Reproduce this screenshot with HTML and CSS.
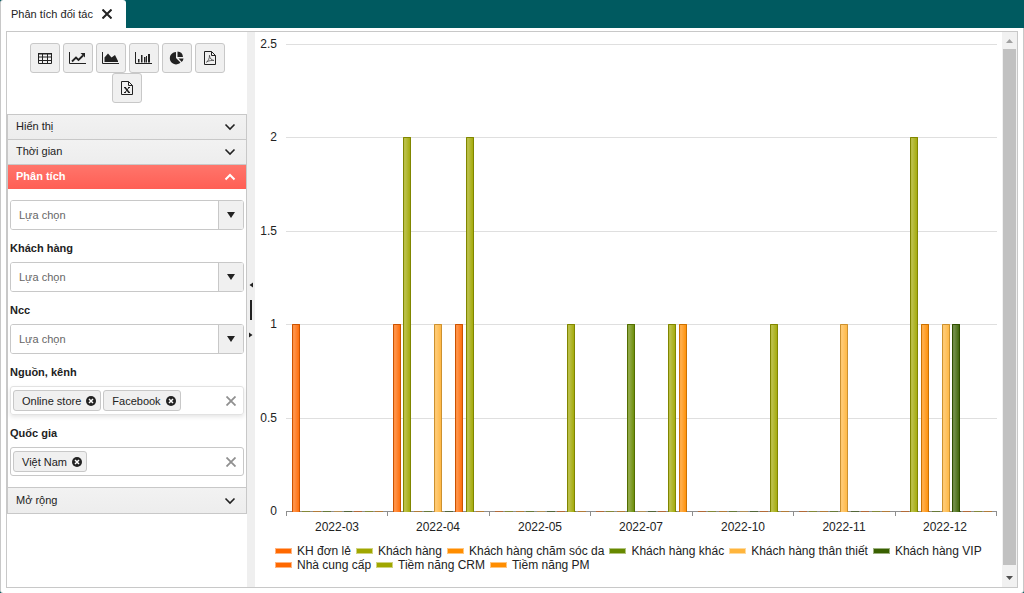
FILE: index.html
```
<!DOCTYPE html>
<html lang="vi">
<head>
<meta charset="utf-8">
<title>Phân tích đối tác</title>
<link rel="stylesheet" href="styles.css">
</head>
<body>
<header class="tabs">
  <div class="tab">
    <span>Phân tích đối tác</span>
    <button class="icon-btn" type="button" aria-label="Đóng thẻ">
      <svg width="10" height="10" viewBox="0 0 10 10"><path d="M.5 .5l9 9M9.500 .5l-9 9" stroke="#222" stroke-width="2" fill="none"/></svg>
    </button>
  </div>
</header>
<main class="page">
  <div class="splitter">
    <aside class="sidebar">
      <div class="toolbar">
        <button class="tool" type="button" aria-label="Bảng"><svg width="16" height="16" viewBox="0 0 16 16"><path fill="none" stroke="#222" d="M1.500 3.500h13v10h-13zM1.500 7h13M1.500 10.500h13M5.500 3v10.500M10.500 3v10.500"/><path fill="#222" d="M1 3h14v1.500H1z"/></svg></button>
        <button class="tool" type="button" aria-label="Biểu đồ đường"><svg width="17" height="16" viewBox="0 0 17 16"><path d="M.5 2v11.500H17" fill="none" stroke="#222"/><path d="M3 11.500l4-4 2.500 2.500L14 5.500" fill="none" stroke="#222" stroke-width="1.800"/><path d="M11.500 3H16v4.500z" fill="#222"/></svg></button>
        <button class="tool" type="button" aria-label="Biểu đồ miền"><svg width="17" height="16" viewBox="0 0 17 16"><path d="M.5 2v11.500H17" fill="none" stroke="#222"/><path d="M2.500 12V7.500L6 3.500 9.500 7.500l3.500-2.500L16 11v1z" fill="#222"/></svg></button>
        <button class="tool" type="button" aria-label="Biểu đồ cột"><svg width="17" height="16" viewBox="0 0 17 16"><path d="M.5 2v11.500H17" fill="none" stroke="#222"/><path d="M3 9h1.500v3.500H3zM6 5h1.500v7.500H6zM9 7h1.500v5.500H9zM11 6h1v6.500h-1zM13 4h2v8.500h-2z" fill="#222"/></svg></button>
        <button class="tool" type="button" aria-label="Biểu đồ tròn"><svg width="16" height="16" viewBox="0 0 16 16"><path d="M7 2v6l4.500 4.500A6.200 6.200 0 1 1 7 2z" fill="#222"/><path d="M8.500 1.500A6 6 0 0 1 14 7H8.500z" fill="#222"/><path d="M9.500 8.500H14.500a6 6 0 0 1-1.800 3.600z" fill="#222"/></svg></button>
        <button class="tool" type="button" aria-label="Xuất PDF"><svg width="16" height="16" viewBox="0 0 16 16"><path d="M2.500 1.500h7l4 4v9h-11zM9.500 1.500v4h4" fill="none" stroke="#222"/><path d="M7.500 5c.2 3.500-1.500 6.500-3.500 7.500M7.500 6c.5 2.500 2 4 4.500 4.500-2.500-.3-5 .2-7 1.200" fill="none" stroke="#555" stroke-width=".9"/></svg></button>
        <button class="tool" type="button" aria-label="Xuất Excel"><svg width="16" height="16" viewBox="0 0 16 16"><path d="M2.500 1.500h7l4 4v9h-11zM9.500 1.500v4h4" fill="none" stroke="#222"/><path d="M6 7.500l4 5" stroke="#222" stroke-width="1.600"/><path d="M10 7.500l-4 5M5 7.500h2M9 7.500h2M5 12.500h2M9 12.500h2" stroke="#222"/></svg></button>
      </div>
      <div class="panels">
        <button class="panel-head" type="button"><span>Hiển thị</span><svg class="chev" viewBox="0 0 12 8"><path d="M1.500 1.500L6 6l4.500-4.500"/></svg></button>
        <button class="panel-head" type="button"><span>Thời gian</span><svg class="chev" viewBox="0 0 12 8"><path d="M1.500 1.500L6 6l4.500-4.500"/></svg></button>
        <button class="panel-head active" type="button" aria-expanded="true"><span>Phân tích</span><svg class="chev" viewBox="0 0 12 8"><path d="M1.500 6.500L6 2l4.500 4.500"/></svg></button>
        <div class="panel-body">
          <div class="combo"><select aria-label="Phân tích"><option>Lựa chọn</option></select><span class="arrow"></span></div>
          <label class="label" for="customer">Khách hàng</label>
          <div class="combo"><select id="customer"><option>Lựa chọn</option></select><span class="arrow"></span></div>
          <label class="label" for="supplier">Ncc</label>
          <div class="combo"><select id="supplier"><option>Lựa chọn</option></select><span class="arrow"></span></div>
          <label class="label" for="source">Nguồn, kênh</label>
          <div class="multi raised">
            <span class="chip">Online store<button class="icon-btn" type="button" aria-label="Bỏ Online store"><svg width="10" height="10" viewBox="0 0 10 10"><circle cx="5" cy="5" r="5" fill="#222"/><path d="M3 3l4 4M7 3l-4 4" stroke="#fff" stroke-width="1.500"/></svg></button></span>
            <span class="chip">Facebook<button class="icon-btn" type="button" aria-label="Bỏ Facebook"><svg width="10" height="10" viewBox="0 0 10 10"><circle cx="5" cy="5" r="5" fill="#222"/><path d="M3 3l4 4M7 3l-4 4" stroke="#fff" stroke-width="1.500"/></svg></button></span>
            <input id="source" type="text">
            <button class="icon-btn" type="button" aria-label="Xóa"><svg width="10" height="10" viewBox="0 0 10 10"><path d="M.5 .5l9 9M9.500 .5l-9 9" stroke="#909090" stroke-width="1.800"/></svg></button>
          </div>
          <label class="label" for="country">Quốc gia</label>
          <div class="multi">
            <span class="chip">Việt Nam<button class="icon-btn" type="button" aria-label="Bỏ Việt Nam"><svg width="10" height="10" viewBox="0 0 10 10"><circle cx="5" cy="5" r="5" fill="#222"/><path d="M3 3l4 4M7 3l-4 4" stroke="#fff" stroke-width="1.500"/></svg></button></span>
            <input id="country" type="text">
            <button class="icon-btn" type="button" aria-label="Xóa"><svg width="10" height="10" viewBox="0 0 10 10"><path d="M.5 .5l9 9M9.500 .5l-9 9" stroke="#909090" stroke-width="1.800"/></svg></button>
          </div>
        </div>
        <button class="panel-head" type="button"><span>Mở rộng</span><svg class="chev" viewBox="0 0 12 8"><path d="M1.500 1.500L6 6l4.500-4.500"/></svg></button>
      </div>
    </aside>
    <div class="splitbar">
      <svg width="4" height="6" viewBox="0 0 4 6"><path d="M4 .5v5L.5 3z" fill="#222"/></svg>
      <span class="grip"></span>
      <svg width="4" height="6" viewBox="0 0 4 6"><path d="M0 .5v5L3.500 3z" fill="#222"/></svg>
    </div>
    <section class="chart">
      <svg class="plot" viewBox="255 32 747 512" role="img" aria-label="Số đối tác theo tháng">
        <defs>
          <linearGradient id="glass"><stop offset="0" stop-color="#fff" stop-opacity=".16"/><stop offset=".25" stop-color="#fff" stop-opacity=".3"/><stop offset="1" stop-color="#fff" stop-opacity="0"/></linearGradient>
          <g id="full"><path class="fill" d="M0 324h8v188H0z"/><path fill="url(#glass)" d="M0 324h8v188H0z"/><path class="edge" d="M.5 512V324.500h7V512"/></g>
          <g id="double"><path class="fill" d="M0 137h8v375H0z"/><path fill="url(#glass)" d="M0 137h8v375H0z"/><path class="edge" d="M.5 512V137.500h7V512"/></g>
          <g id="zero" opacity=".6">
            <path fill="#cc5300" d="M6 511h8v1H6z"/><path fill="#808600" d="M16 511h8v1h-8z"/><path fill="#cc7100" d="M27 511h8v1h-8z"/><path fill="#526e00" d="M37 511h8v1h-8z"/><path fill="#cc9130" d="M48 511h8v1h-8z"/><path fill="#2e4d00" d="M58 511h8v1h-8z"/><path fill="#cc5300" d="M68 511h8v1h-8z"/><path fill="#808600" d="M79 511h8v1h-8z"/><path fill="#cc7100" d="M89 511h8v1h-8z"/>
          </g>
        </defs>
        <path class="grid" d="M286 44.500h711M286 137.500h711M286 231.500h711M286 324.500h711M286 418.500h711"/>
        <path class="axis" d="M286 511.500h711M286.500 511v5M387.500 511v5M489.500 511v5M590.500 511v5M692.500 511v5M793.500 511v5M895.500 511v5M996.500 511v5"/>
        <use href="#zero" x="286"/><use href="#zero" x="387"/><use href="#zero" x="489"/><use href="#zero" x="590"/><use href="#zero" x="692"/><use href="#zero" x="793"/><use href="#zero" x="895"/>
        <use class="orange" href="#full" x="292"/>
        <use class="orange" href="#full" x="393"/>
        <use class="olive" href="#double" x="403"/>
        <use class="sand" href="#full" x="434"/>
        <use class="orange" href="#full" x="455"/>
        <use class="olive" href="#double" x="466"/>
        <use class="olive" href="#full" x="567"/>
        <use class="green" href="#full" x="627"/>
        <use class="olive" href="#full" x="668"/>
        <use class="amber" href="#full" x="679"/>
        <use class="olive" href="#full" x="770"/>
        <use class="sand" href="#full" x="840"/>
        <use class="olive" href="#double" x="910"/>
        <use class="amber" href="#full" x="921"/>
        <use class="sand" href="#full" x="942"/>
        <use class="forest" href="#full" x="952"/>
        <g text-anchor="end">
          <text x="277" y="48">2.5</text><text x="277" y="141">2</text><text x="277" y="235">1.5</text><text x="277" y="328">1</text><text x="277" y="422">0.5</text><text x="277" y="515">0</text>
        </g>
        <g text-anchor="middle">
          <text x="337" y="531">2022-03</text><text x="438" y="531">2022-04</text><text x="540" y="531">2022-05</text><text x="641" y="531">2022-07</text><text x="743" y="531">2022-10</text><text x="844" y="531">2022-11</text><text x="945" y="531">2022-12</text>
        </g>
      </svg>
      <ul class="legend">
        <li class="orange">KH đơn lẻ</li>
        <li class="olive">Khách hàng</li>
        <li class="amber">Khách hàng chăm sóc da</li>
        <li class="green">Khách hàng khác</li>
        <li class="sand">Khách hàng thân thiết</li>
        <li class="forest">Khách hàng VIP</li>
        <li class="orange">Nhà cung cấp</li>
        <li class="olive">Tiềm năng CRM</li>
        <li class="amber">Tiềm năng PM</li>
      </ul>
    </section>
    <div class="scrollbar">
      <svg width="7" height="4" viewBox="0 0 7 4"><path d="M0 4h7L3.500 0z" fill="#a0a0a0"/></svg>
      <span class="thumb"></span>
      <svg width="7" height="4" viewBox="0 0 7 4"><path d="M0 0h7L3.500 4z" fill="#505050"/></svg>
    </div>
  </div>
</main>
</body>
</html>
```
FILE: styles.css
```
* { box-sizing: border-box; }
body {
  margin: 0;
  min-height: 100vh;
  display: flex;
  flex-direction: column;
  background: #005a60;
  color: #222;
  font: 11px/14px "Liberation Sans", Arial, sans-serif;
}
button, input, select { font: inherit; color: inherit; }
svg { display: block; }
.icon-btn { display: block; flex: none; padding: 0; border: 0; background: none; }

.tabs { display: flex; height: 28px; }
.tab {
  display: flex;
  align-items: center;
  gap: 9px;
  padding: 0 14px 0 10px;
  background: #fff;
  border-left: 1px solid #c8c8c8;
  border-radius: 3px 3px 0 0;
}
.page {
  flex: 1;
  display: flex;
  padding: 3px 5px 5px;
  background: #fff;
  border: solid #c8c8c8;
  border-width: 0 1px;
  border-radius: 0 0 3px 3px;
}
.splitter { flex: 1; display: flex; min-width: 0; border: 1px solid #c8c8c8; }
.sidebar { flex: none; width: 240px; }
.toolbar { display: flex; flex-wrap: wrap; justify-content: center; column-gap: 3px; padding: 11px 8px; }
.tool {
  display: flex;
  align-items: center;
  justify-content: center;
  width: 30px;
  height: 30px;
  padding: 0;
  background: #f0f0f0;
  border: 1px solid #c8c8c8;
  border-radius: 3px;
}

.panels { border: 1px solid #c8c8c8; }
.panel-head {
  display: flex;
  align-items: center;
  justify-content: space-between;
  width: 100%;
  height: 25px;
  padding: 0 10px 2px 8px;
  border: 0;
  border-bottom: 1px solid #c8c8c8;
  background: linear-gradient(#f2f2f2, #ededed);
}
.panel-head:last-child { border-bottom: 0; }
.panel-head.active {
  height: 24px;
  border: 0;
  background: linear-gradient(#ff756b, #ff5f55);
  color: #fff;
  font-weight: bold;
}
.chev { width: 12px; height: 8px; margin-top: 2px; fill: none; stroke: currentColor; stroke-width: 1.6; }
.active .chev { stroke-width: 2; }
.panel-body { padding: 11px 2px; border-bottom: 1px solid #c8c8c8; }
.label { display: block; margin: 11px 0 7px; font-weight: bold; }
.combo { position: relative; height: 30px; border: 1px solid #c8c8c8; border-radius: 3px; overflow: hidden; }
.combo select {
  display: block;
  width: 100%;
  height: 28px;
  padding: 0 34px 1px 8px;
  border: 0;
  background: #fff;
  color: #666;
  appearance: none;
}
.arrow {
  position: absolute;
  top: 0;
  right: 0;
  width: 25px;
  height: 28px;
  display: grid;
  place-items: center;
  background: #f0f0f0;
  border-left: 1px solid #c8c8c8;
  pointer-events: none;
}
.arrow::after { content: ""; border: 4px solid transparent; border-top: 6px solid #222; border-bottom: 0; }
.multi {
  display: flex;
  align-items: center;
  gap: 2px;
  height: 29px;
  padding: 0 7px 0 2px;
  border: 1px solid #c8c8c8;
  border-radius: 3px;
}
.multi.raised { border-color: #e2e2e2; box-shadow: 0 2px 4px #0000001a; }
.multi input { flex: 1; min-width: 0; border: 0; background: none; }
.chip {
  display: flex;
  align-items: center;
  gap: 5px;
  height: 21px;
  padding: 0 4px 0 8px;
  white-space: nowrap;
  background: #f0f0f0;
  border: 1px solid #c8c8c8;
  border-radius: 3px;
}

.splitbar {
  flex: none;
  width: 8px;
  display: flex;
  flex-direction: column;
  align-items: center;
  justify-content: center;
  gap: 12px;
  background: #efefef;
}
.grip { width: 2px; height: 20px; background: #222; }

.chart { flex: 1; min-width: 0; font-size: 12px; }
.plot { width: 100%; }
.plot text { fill: #222; }
.grid { stroke: #dfdfdf; }
.axis { stroke: #8e8e8e; fill: none; }
.fill { fill: var(--tone); }
.edge { fill: none; stroke: var(--edge); }
.orange { --tone: #ff6800; --edge: #cc5300; }
.olive { --tone: #a0a700; --edge: #808600; }
.amber { --tone: #ff8d00; --edge: #cc7100; }
.green { --tone: #678900; --edge: #526e00; }
.sand { --tone: #ffb53c; --edge: #cc9130; }
.forest { --tone: #396000; --edge: #2e4d00; }
.legend { display: flex; flex-wrap: wrap; column-gap: 5px; margin: 0; padding: 0 15px 0 20px; list-style: none; }
.legend li { display: flex; align-items: center; gap: 5px; }
.legend li::before {
  content: "";
  width: 15px;
  height: 4px;
  background: var(--tone);
  border: 1px solid #ffffff80;
}

.scrollbar {
  flex: none;
  width: 15px;
  display: flex;
  flex-direction: column;
  align-items: center;
  gap: 6px;
  padding: 7px 0;
  background: #f1f1f1;
}
.thumb { flex: 1; width: 13px; margin-bottom: 5px; background: #c1c1c1; }
```
